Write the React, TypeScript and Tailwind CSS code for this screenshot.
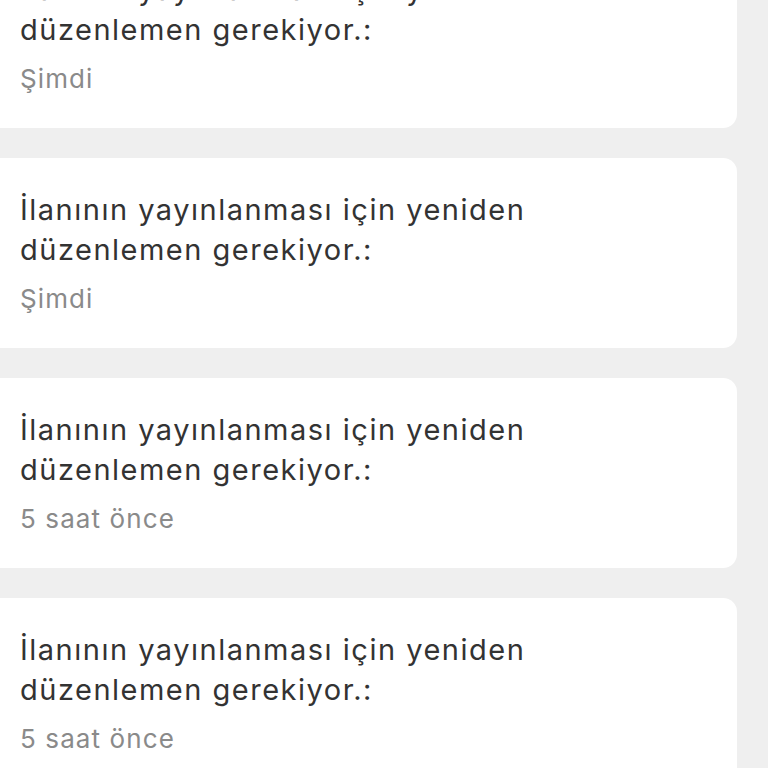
const notifications = [
  { time: 'Şimdi' },
  { time: 'Şimdi' },
  { time: '5 saat önce' },
  { time: '5 saat önce' },
]

function NotificationCard({ time }: { time: string }) {
  return (
    <div className="-ml-[20px] mr-[31px] h-[190px] shrink-0 rounded-[14px] bg-white pl-[40px] pt-[32px]">
      <p className="text-[29px] leading-[40px] tracking-[1.5px] text-[#333333]">
        İlanının yayınlanması için yeniden
        <br />
        düzenlemen gerekiyor.:
      </p>
      <p className="mt-[13px] text-[26px] leading-[32px] tracking-[1.1px] text-[#8a8a8a]">{time}</p>
    </div>
  )
}

export default function App() {
  return (
    <div
      className="h-[768px] overflow-hidden bg-[#efefef]"
      style={{ fontFamily: 'Inter, "Noto Sans", sans-serif' }}
    >
      <div className="-mt-[62px] flex flex-col gap-[30px]">
        {notifications.map((n, i) => (
          <NotificationCard key={i} time={n.time} />
        ))}
      </div>
    </div>
  )
}
